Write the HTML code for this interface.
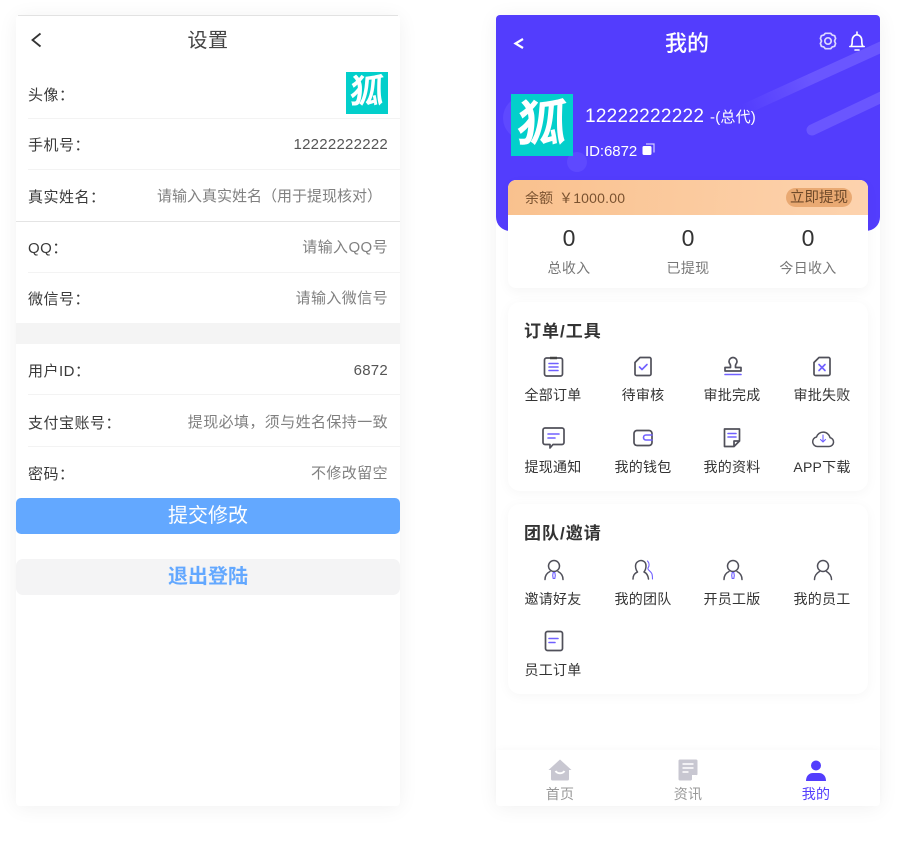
<!DOCTYPE html>
<html lang="zh"><head><meta charset="utf-8"><title>设置</title>
<style>
html,body{margin:0;padding:0;background:#fff}
body{width:898px;height:841px;position:relative;overflow:hidden;font-family:"Liberation Sans","Noto Sans CJK SC",sans-serif;color:#333}
.card{position:absolute;top:15px;width:384px;height:791px;background:#fff;border-radius:4px;box-shadow:0 2px 20px rgba(0,0,0,.06)}
.t{position:absolute;white-space:nowrap;line-height:20px;font-size:14px}
.l{font-size:15px;letter-spacing:.5px;color:#3a3a3a;margin-top:1px}
.v{font-size:15px;letter-spacing:.4px;text-align:right;right:510px;color:#808080;margin-top:1px}
.n{font-size:15px;letter-spacing:.25px;text-align:right;right:510px;color:#555;margin-top:1px}
.m{letter-spacing:.25px;text-align:center;width:80px}
.c{text-align:center}
.g{color:#777}
.ln{position:absolute;height:1px;background:#f3f3f3}
svg{position:absolute;overflow:visible}
.av{position:absolute;background:#03cfcb;overflow:hidden;color:#fff;text-align:center;font-family:"Liberation Sans","Noto Sans CJK SC",sans-serif;font-weight:700}
.av span{display:block;transform:skewX(-5deg)}
.panel{position:absolute;left:508px;width:360px;background:#fff;border-radius:12px;box-shadow:0 2px 12px rgba(0,0,0,.04)}
.i{fill:none;stroke:#50505a;stroke-width:1.7;stroke-linecap:round;stroke-linejoin:round}
.p{fill:none;stroke:#7060ff;stroke-width:1.6;stroke-linecap:round;stroke-linejoin:round}
.q{fill:none;stroke:#7060ff;stroke-width:1.1;stroke-linecap:round;stroke-linejoin:round}
.h{font-size:17px;letter-spacing:1px;font-weight:700;color:#333}
</style></head><body>

<!-- LEFT -->
<div class="card" style="left:16px"></div>
<div style="position:absolute;left:18px;top:15px;width:380px;height:1px;background:#e2e2e2"></div>
<svg style="left:30px;top:32px" width="12" height="16" viewBox="0 0 12 16"><path d="M10.500 1.500 2.500 8l8 6.500" fill="none" stroke="#333" stroke-width="1.800"/></svg>
<div class="t c" style="left:16px;width:384px;top:30px;font-size:20px;line-height:22px;color:#444;letter-spacing:.5px">设置</div>

<div class="t l" style="left:28px;top:85px">头像：</div>
<div class="av" style="left:346px;top:72px;width:42px;height:42px;font-size:34px;line-height:40px"><span>狐</span></div>
<div class="ln" style="left:28px;top:118px;width:372px"></div>
<div class="t l" style="left:28px;top:135px">手机号：</div>
<div class="t n" style="top:134px">12222222222</div>
<div class="ln" style="left:28px;top:169px;width:372px"></div>
<div class="t l" style="left:28px;top:187px">真实姓名：</div>
<div class="t" style="left:157px;top:187px;font-size:15px;color:#808080">请输入真实姓名（用于提现核对）</div>
<div style="position:absolute;left:16px;top:221px;width:384px;height:1px;background:#e4e4e4"></div>
<div class="t l" style="left:28px;top:238px">QQ：</div>
<div class="t v" style="top:237px">请输入QQ号</div>
<div class="ln" style="left:28px;top:272px;width:372px"></div>
<div class="t l" style="left:28px;top:289px">微信号：</div>
<div class="t v" style="top:288px">请输入微信号</div>
<div style="position:absolute;left:16px;top:323px;width:384px;height:21px;background:#f4f4f4"></div>
<div class="t l" style="left:28px;top:361px">用户ID：</div>
<div class="t n" style="top:360px">6872</div>
<div class="ln" style="left:28px;top:394px;width:372px"></div>
<div class="t l" style="left:28px;top:413px">支付宝账号：</div>
<div class="t v" style="top:412px">提现必填，须与姓名保持一致</div>
<div class="ln" style="left:28px;top:446px;width:372px"></div>
<div class="t l" style="left:28px;top:464px">密码：</div>
<div class="t v" style="top:463px">不修改留空</div>
<div class="c" style="position:absolute;left:16px;top:498px;width:384px;height:36px;line-height:37px;background:#63a8ff;border-radius:5px;color:#fff;font-size:20px">提交修改</div>
<div class="c" style="position:absolute;left:16px;top:559px;width:384px;height:36px;line-height:37px;background:#f4f4f5;border-radius:7px;color:#63a8ff;font-size:20px;font-weight:700">退出登陆</div>

<!-- RIGHT -->
<div class="card" style="left:496px"></div>
<div style="position:absolute;left:496px;top:15px;width:384px;height:216px;background:#533dfd;border-radius:4px 4px 14px 14px;overflow:hidden">
  <svg style="left:0;top:0" width="384" height="216">
    <defs><linearGradient id="f" gradientUnits="userSpaceOnUse" x1="247" y1="95" x2="384" y2="33"><stop offset="0" stop-color="#533dfd"/><stop offset=".5" stop-color="#6a56ff"/><stop offset="1" stop-color="#6a56ff"/></linearGradient></defs>
    <path d="M247 95 394 28" stroke="url(#f)" stroke-width="11" fill="none"/>
    <path d="M316 115 394 78" stroke="#6a56ff" stroke-width="11" stroke-linecap="round" fill="none"/>
    <circle cx="29" cy="103" r="22" fill="#5e49ff"/>
    <circle cx="81" cy="147" r="10" fill="#5e49ff"/>
  </svg>
</div>
<svg style="left:513px;top:37px" width="12" height="13" viewBox="0 0 12 13"><path d="M10 2 2.500 6.500 10 11" fill="none" stroke="#fff" stroke-width="2.200"/></svg>
<div class="t c" style="left:496px;width:382px;top:31px;font-size:22px;line-height:26px;color:#fff;font-weight:500">我的</div>
<svg style="left:819px;top:32px" width="18" height="18" viewBox="0 0 18 18"><path d="M6.300 1.300h5.400l1.500 1.800 2.400.6 1 2.700L15.500 9l1.100 2.600-1 2.700-2.400.6-1.500 1.800H6.300l-1.500-1.800-2.400-.6-1-2.700L2.500 9 1.400 6.400l1-2.700 2.400-.6z" fill="none" stroke="#dcd7ff" stroke-width="1.700" stroke-linejoin="round"/><circle cx="9" cy="9" r="3.200" fill="none" stroke="#dcd7ff" stroke-width="1.700"/></svg>
<svg style="left:848px;top:31px" width="18" height="20" viewBox="0 0 18 20"><path d="M9 1v2M3 15.500c1.200-1.500 1.200-3 1.200-6 0-3.200 2.200-5.700 4.800-5.700s4.800 2.500 4.800 5.700c0 3 0 4.500 1.200 6zM1.800 15.500h14.400M7 19h4" fill="none" stroke="#fff" stroke-width="1.600" stroke-linecap="round" stroke-linejoin="round"/></svg>

<div class="av" style="left:511px;top:94px;width:62px;height:62px;font-size:50px;line-height:60px"><span>狐</span></div>
<div class="t" style="left:585px;top:106px;font-size:19px;line-height:22px;color:#fff;letter-spacing:.27px">12222222222</div>
<div class="t" style="left:710px;top:108px;font-size:15px;color:#fff;letter-spacing:.2px">-(总代)</div>
<div class="t" style="left:585px;top:142px;color:#fff;font-size:15px;letter-spacing:-.05px">ID:6872</div>
<svg style="left:642px;top:143px" width="13" height="13" viewBox="0 0 13 13"><path d="M4 1h8v8.500" fill="none" stroke="#cfc9ff" stroke-width="1.200"/><rect x="0.500" y="3" width="9" height="9" rx="1.500" fill="#fff"/></svg>

<div style="position:absolute;left:508px;top:180px;width:360px;height:108px;background:#fff;border-radius:8px;box-shadow:0 4px 12px rgba(0,0,0,.04)"></div>
<div style="position:absolute;left:508px;top:180px;width:360px;height:35px;background:linear-gradient(95deg,#f9c18e,#fdd3ae);border-radius:8px 8px 0 0"></div>
<div class="t" style="left:525px;top:188px;color:#7a5230">余额</div>
<div class="t" style="left:559px;top:188px;color:#7a5230;letter-spacing:.2px">￥1000.00</div>
<div class="c" style="position:absolute;left:786px;top:188px;width:66px;height:19px;line-height:21px;background:#e9a972;border-radius:10px;font-size:14.500px;color:#6f4a2a">立即提现</div>
<div class="t c" style="left:509px;width:120px;top:225px;font-size:23px;line-height:26px">0</div>
<div class="t c" style="left:628px;width:120px;top:225px;font-size:23px;line-height:26px">0</div>
<div class="t c" style="left:748px;width:120px;top:225px;font-size:23px;line-height:26px">0</div>
<div class="t c g" style="left:509px;width:120px;top:258px;letter-spacing:.3px">总收入</div>
<div class="t c g" style="left:628px;width:120px;top:258px;letter-spacing:.3px">已提现</div>
<div class="t c g" style="left:748px;width:120px;top:258px;letter-spacing:.3px">今日收入</div>

<!-- Panel 1 -->
<div class="panel" style="top:302px;height:189px"></div>
<div class="t h" style="left:524px;top:322px">订单/工具</div>
<svg style="left:543px;top:356px" width="21" height="21" viewBox="0 0 21 21"><rect class="i" x="1.500" y="2" width="18" height="18" rx="2"/><path d="M7 2h7" stroke="#444" stroke-width="2.500"/><path class="p" d="M6 7.500h9M6 11h9M6 14.500h9"/></svg>
<div class="t m" style="left:513px;top:385px">全部订单</div>
<svg style="left:634px;top:356px" width="18" height="21" viewBox="0 0 18 21"><path class="i" d="M6 1.500h9.500A1.500 1.500 0 0 1 17 3v15a1.500 1.500 0 0 1-1.500 1.500h-13A1.500 1.500 0 0 1 1 18V6.500z"/><path class="p" d="m5.500 11 2.500 2.500L13 8.500"/></svg>
<div class="t m" style="left:603px;top:385px">待审核</div>
<svg style="left:723px;top:356px" width="20" height="21" viewBox="0 0 20 21"><path class="i" d="M7.500 9.500C7.500 8 6 7.500 6 5.500a4 4 0 0 1 8 0c0 2-1.500 2.500-1.500 4v2h5.500v3.500H2v-3.500h5.500z"/><path class="p" d="M2 18.500h16"/></svg>
<div class="t m" style="left:692px;top:385px">审批完成</div>
<svg style="left:813px;top:356px" width="18" height="21" viewBox="0 0 18 21"><path class="i" d="M6 1.500h9.500A1.500 1.500 0 0 1 17 3v15a1.500 1.500 0 0 1-1.500 1.500h-13A1.500 1.500 0 0 1 1 18V6.500z"/><path class="p" d="m6 8.500 6 6m0-6-6 6"/></svg>
<div class="t m" style="left:782px;top:385px">审批失败</div>

<svg style="left:542px;top:427px" width="23" height="23" viewBox="0 0 23 23"><path class="i" d="M3 1h17a2 2 0 0 1 2 2v12.500a2 2 0 0 1-2 2h-9l-3 3.500v-3.500H3a2 2 0 0 1-2-2V3a2 2 0 0 1 2-2z"/><path class="p" d="M6 7h11M6 11h7"/></svg>
<div class="t m" style="left:513px;top:457px">提现通知</div>
<svg style="left:633px;top:429px" width="20" height="18" viewBox="0 0 20 18"><rect class="i" x="1" y="1.500" width="18" height="15" rx="3"/><path class="p" d="M19 6h-6a2.500 2.500 0 0 0 0 5h6"/></svg>
<div class="t m" style="left:603px;top:457px">我的钱包</div>
<svg style="left:723px;top:428px" width="18" height="20" viewBox="0 0 18 20"><path class="i" d="M1.500 1h15v12l-5.500 5.500H1.500zM16.500 13H11v5.500"/><path class="p" d="M5 5.500h8M5 9h8"/></svg>
<div class="t m" style="left:692px;top:457px">我的资料</div>
<svg style="left:811px;top:428px" width="24" height="20" viewBox="0 0 24 20"><path d="M6.500 18.500h11.500a4.500 4.500 0 0 0 1-8.900A7 7 0 0 0 5.500 9 4.800 4.800 0 0 0 6.500 18.500z" fill="none" stroke="#50505a" stroke-width="1.500" stroke-linejoin="round"/><path class="q" d="M12 7v7M9.500 11.500 12 14l2.500-2.500"/></svg>
<div class="t m" style="left:782px;top:457px">APP下载</div>

<!-- Panel 2 -->
<div class="panel" style="top:504px;height:190px"></div>
<div class="t h" style="left:524px;top:524px">团队/邀请</div>
<svg style="left:544px;top:559px" width="20" height="22" viewBox="0 0 20 22"><circle class="i" cx="10" cy="7" r="5.500" style="stroke-width:1.500"/><path class="i" d="M1 20.500c0-4 2-6.500 5-8M19 20.500c0-4-2-6.500-5-8" style="stroke-width:1.500"/><path class="q" d="M9.200 13.500h1.600l.5 3-.5 3H9.200l-.5-3z"/></svg>
<div class="t m" style="left:513px;top:589px">邀请好友</div>
<svg style="left:632px;top:559px" width="22" height="22" viewBox="0 0 22 22"><path class="i" style="stroke-width:1.500" d="M1 20c0-4 2-6 4.500-7C4 11 3.500 9 3.500 7a5.500 5.500 0 0 1 8.500-4.500c1.500 1 2 3 2 4.500 0 2-.5 4-2 6 2.500 1 4 3 4.500 7"/><path class="q" d="M15.500 2c2 2 2 5 .5 7-1 2 3 3 4 6 .5 2 .5 3 .5 5"/></svg>
<div class="t m" style="left:603px;top:589px">我的团队</div>
<svg style="left:723px;top:559px" width="20" height="22" viewBox="0 0 20 22"><circle class="i" cx="10" cy="7" r="5.500" style="stroke-width:1.500"/><path class="i" d="M1 20.500c0-4 2-6.500 5-8M19 20.500c0-4-2-6.500-5-8" style="stroke-width:1.500"/><path class="q" d="M9.200 13.500h1.600l.5 3-.5 3H9.200l-.5-3z"/></svg>
<div class="t m" style="left:692px;top:589px">开员工版</div>
<svg style="left:813px;top:559px" width="20" height="22" viewBox="0 0 20 22"><circle class="i" cx="10" cy="7" r="5.500" style="stroke-width:1.500"/><path class="i" style="stroke-width:1.500" d="M1.500 20.500c0-4 2.500-6.500 5-8M18.500 20.500c0-4-2.500-6.500-5-8"/></svg>
<div class="t m" style="left:782px;top:589px">我的员工</div>
<svg style="left:544px;top:630px" width="20" height="22" viewBox="0 0 20 22"><rect class="i" x="1.500" y="1.500" width="17" height="19" rx="2"/><path class="p" d="M5 8.500h9M5 12.500h6"/></svg>
<div class="t m" style="left:513px;top:660px">员工订单</div>

<!-- Tab bar -->
<div style="position:absolute;left:496px;top:750px;width:384px;height:56px;background:#fff;border-radius:0 0 4px 4px;box-shadow:0 -2px 6px rgba(0,0,0,.02)"></div>
<svg style="left:548px;top:759px" width="24" height="22" viewBox="0 0 24 22"><path d="M12 .5 23.500 11H21v9a1.500 1.500 0 0 1-1.500 1.500h-15A1.500 1.500 0 0 1 3 20v-9H.5z" fill="#c8c7d1"/><path d="M7.500 12c2 3 7 3 9 0" fill="none" stroke="#fff" stroke-width="2"/></svg>
<div class="t m" style="left:520px;top:784px;color:#999">首页</div>
<svg style="left:678px;top:759px" width="20" height="22" viewBox="0 0 20 22"><path d="M2 .5h16A1.500 1.500 0 0 1 19.500 2v13.500l-6.500 6H2A1.500 1.500 0 0 1 .5 20V2A1.500 1.500 0 0 1 2 .5z" fill="#c8c7d1"/><path d="M4.500 5h11M4.500 9h11M4.500 13h6" stroke="#fff" stroke-width="1.500"/><path d="M19 16h-5v5" fill="#fff"/></svg>
<div class="t m" style="left:648px;top:784px;color:#999">资讯</div>
<svg style="left:806px;top:760px" width="20" height="22" viewBox="0 0 20 22"><circle cx="10" cy="5.500" r="5" fill="#533dfd"/><path d="M0 21c0-5 3-8 7-8h6c4 0 7 3 7 8z" fill="#533dfd"/></svg>
<div class="t m" style="left:776px;top:784px;color:#533dfd">我的</div>
</body></html>
